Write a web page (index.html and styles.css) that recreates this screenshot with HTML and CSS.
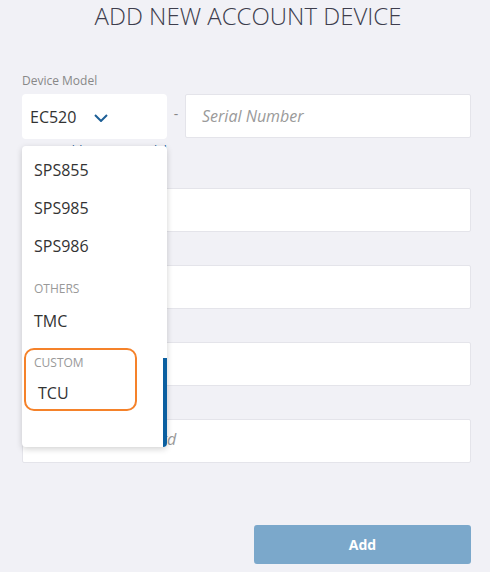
FILE: index.html
```html
<!DOCTYPE html>
<html>
<head>
<meta charset="utf-8">
<link rel="stylesheet" href="styles.css">
</head>
<body>
<div class="page">
  <h1 class="title">ADD NEW ACCOUNT DEVICE</h1>

  <div class="field first">
    <div class="label">Device Model</div>
    <div class="model-row">
      <div class="select">
        <span class="select-value">EC520</span>
        <svg class="chevron" width="14" height="8" viewBox="0 0 14 8"><path d="M1 1 L7 7 L13 1" fill="none" stroke="#1d5f96" stroke-width="2"/></svg>
      </div>
      <span class="dash">-</span>
      <div class="input"><span class="placeholder">Serial Number</span></div>
    </div>
    <div class="link">Add Custom Model</div>
  </div>

  <div class="field">
    <div class="label"></div>
    <div class="input"></div>
  </div>
  <div class="field">
    <div class="label"></div>
    <div class="input"></div>
  </div>
  <div class="field">
    <div class="label"></div>
    <div class="input"></div>
  </div>
  <div class="field">
    <div class="label"></div>
    <div class="input raised"><span class="placeholder">Device Password</span></div>
  </div>

  <div class="actions">
    <button class="add-btn">Add</button>
  </div>

  <div class="dropdown">
    <div class="item">SPS855</div>
    <div class="item">SPS985</div>
    <div class="item">SPS986</div>
    <div class="group">OTHERS</div>
    <div class="item">TMC</div>
    <div class="group custom">CUSTOM</div>
    <div class="item tcu">TCU</div>
    <div class="highlight"></div>
    <div class="scrollbar"></div>
  </div>
</div>
</body>
</html>
```

FILE: styles.css
```css
html, body {
  margin: 0;
  padding: 0;
  background: #f1f1f6;
}
body {
  font-family: "Open Sans", "Noto Sans", sans-serif;
  color: #333;
}
.page {
  position: relative;
  width: 490px;
  height: 572px;
  box-sizing: border-box;
  padding: 0 19px 0 22px;
}
.title {
  margin: 0;
  text-align: center;
  font-weight: 300;
  font-size: 24px;
  line-height: 32px;
  color: #3d3d4d;
  padding-left: 3px;
}
.field {
  margin-top: 12px;
}
.field.first {
  margin-top: 41px;
}
.label {
  font-size: 12px;
  line-height: 16px;
  height: 16px;
  color: #888;
  margin-bottom: 5px;
}
.model-row {
  display: flex;
  align-items: flex-start;
}
.select {
  width: 145px;
  height: 45px;
  box-sizing: border-box;
  background: #fff;
  border-radius: 4px;
  display: flex;
  align-items: center;
  padding-left: 8px;
}
.select-value {
  font-size: 16px;
  color: #333;
  width: 64px;
}
.chevron {
  display: block;
  margin-top: 2px;
}
.dash {
  width: 18px;
  text-align: center;
  color: #888;
  font-size: 14px;
  line-height: 40px;
}
.input {
  flex: 1;
  height: 44px;
  box-sizing: border-box;
  background: #fff;
  border: 1px solid #e4e4ea;
  border-radius: 2px;
  display: flex;
  align-items: center;
  padding-left: 16px;
}
.input.raised {
  padding-bottom: 4px;
  padding-left: 36px;
}
.placeholder {
  font-style: italic;
  font-size: 16px;
  color: #9a9a9a;
}
.link {
  margin-top: 4px;
  height: 12px;
  line-height: 15px;
  font-size: 12px;
  color: #1d5f96;
  padding-left: 38px;
  overflow: visible;
}
.actions {
  display: flex;
  justify-content: flex-end;
  margin-top: 62px;
}
.add-btn {
  width: 217px;
  height: 39px;
  border: none;
  border-radius: 3px;
  background: #7ba8cb;
  color: #fff;
  font-family: "Open Sans", "Noto Sans", sans-serif;
  font-weight: 700;
  font-size: 14px;
}
.dropdown {
  position: absolute;
  left: 22px;
  top: 146px;
  width: 145px;
  height: 301px;
  box-sizing: border-box;
  background: #fff;
  border-radius: 4px;
  box-shadow: 0 2px 6px rgba(0, 0, 0, 0.18);
  padding-top: 5px;
  overflow: hidden;
}
.item {
  height: 38px;
  line-height: 38px;
  font-size: 16px;
  color: #333;
  padding-left: 12px;
}
.item.tcu {
  padding-left: 16px;
}
.group {
  font-size: 12px;
  line-height: 16px;
  color: #999;
  padding: 16px 0 5px 12px;
}
.group.custom {
  padding: 15px 0 3px 12px;
}
.highlight {
  position: absolute;
  left: 2px;
  top: 202px;
  width: 113px;
  height: 63px;
  box-sizing: border-box;
  border: 2px solid #f5822a;
  border-radius: 10px;
}
.scrollbar {
  position: absolute;
  right: 0;
  top: 212px;
  bottom: 0;
  width: 4px;
  background: #0b5fa0;
}
```
